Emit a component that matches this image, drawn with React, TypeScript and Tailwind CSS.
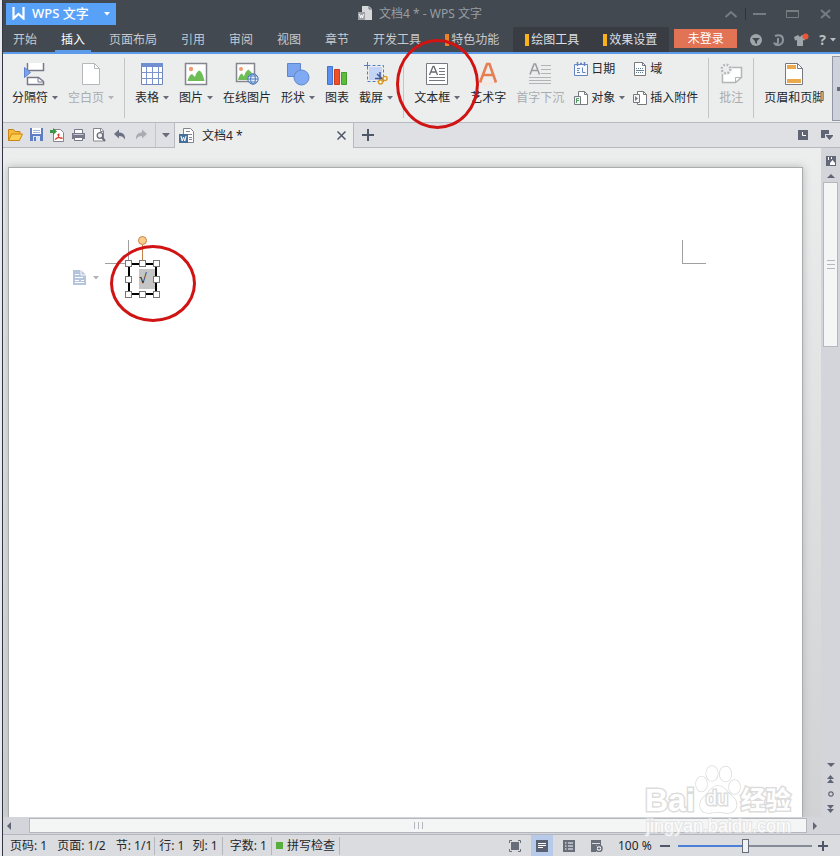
import { useState } from "react";
import type { ReactNode } from "react";

const Svg = ({ w, h, children }: { w: number; h: number; children: ReactNode }) => (
  <svg width={w} height={h} viewBox={`0 0 ${w} ${h}`} fill="none" className="shrink-0" aria-hidden="true">
    {children}
  </svg>
);

const Caret = ({ color = "#676c78" }: { color?: string }) => (
  <Svg w={6} h={4}>
    <path d="M0 0h6L3 3.5z" fill={color} />
  </Svg>
);

/* ribbon icons, 24px high */

const BreakIcon = () => (
  <Svg w={24} h={24}>
    <path d="M4.500 1v7.500h16V1" fill="#fff" stroke="#77798a" strokeWidth="1.500" />
    <path d="M4.500 22.500V15.500h11l5 4v3z" fill="#fff" stroke="#77798a" strokeWidth="1.500" />
    <path d="M15 15.500V20h5" stroke="#77798a" />
    <path d="M1.500 5.500 7.500 10.500l-6 5z" fill="#7da0ea" stroke="#5e83cf" />
  </Svg>
);

const BlankPageIcon = () => (
  <Svg w={24} h={24}>
    <path d="M3.500 1.500h12l5 5v16h-17z" fill="#fff" stroke="#b5b7bb" />
    <path d="M15.500 1.500v5h5" stroke="#b5b7bb" />
  </Svg>
);

const TableIcon = () => (
  <Svg w={24} h={24}>
    <path d="M1.500 1.500h21v21h-21z" fill="#fff" stroke="#6f87b8" />
    <path d="M1 1h22v4H1z" fill="#6f8fd0" />
    <path d="M1 10.500h22M1 16.500h22M6.500 5v17M12.500 5v17M18.500 5v17" stroke="#7b95cc" />
  </Svg>
);

const PictureIcon = () => (
  <Svg w={24} h={24}>
    <path d="M1.500 1.500h21v21h-21z" fill="#fff" stroke="#85858f" strokeWidth="1.500" />
    <circle cx="7" cy="7" r="2.200" fill="#ef9a70" />
    <path d="M3.500 19c1-4 2.500-6.500 4.500-7l3 3c1-4 2.500-6 4.500-6.500 2.500 1.500 4 6 5 10.500z" fill="#6fbd57" />
  </Svg>
);

const OnlinePictureIcon = () => (
  <Svg w={24} h={24}>
    <path d="M1.500 1.500h18v18h-18z" fill="#fff" stroke="#85858f" strokeWidth="1.500" />
    <circle cx="6" cy="7" r="2" fill="#ef9a70" />
    <path d="M3 18c1-4 2-6 4-6.500l2 3c1-4 2.500-6 4.500-7L17 11l-3 7z" fill="#6fbd57" />
    <circle cx="18" cy="17" r="5.200" fill="#e9f1ff" stroke="#4c78b8" />
    <ellipse cx="18" cy="17" rx="2.300" ry="5" stroke="#4c78b8" />
    <path d="M13 17h10M14 14h8M14 20h8" stroke="#4c78b8" />
  </Svg>
);

const ShapesIcon = () => (
  <Svg w={24} h={24}>
    <path d="M1.500 1.500h13v13h-13z" fill="#7ba5ef" stroke="#5f86cc" />
    <circle cx="15.500" cy="15.500" r="7.500" fill="#80aaf4" stroke="#5f86cc" />
  </Svg>
);

const ChartIcon = () => (
  <Svg w={24} h={24}>
    <path d="M2.500 4.500h5v18h-5z" fill="#5b8ff0" stroke="#4273cf" />
    <path d="M9.500 7.500h5v15h-5z" fill="#ef5027" stroke="#cc3d1a" />
    <path d="M16.500 10.500h5v12h-5z" fill="#5cbd3c" stroke="#459a29" />
  </Svg>
);

const ScreenshotIcon = () => (
  <Svg w={24} h={24}>
    <path d="M5 5h13v13H5z" fill="#c3d4f5" />
    <path d="M3.500 3.500h16v16h-16z" stroke="#557ac6" strokeDasharray="3 2" />
    <path d="M3.500 0v6M0 3.500h6" stroke="#557ac6" />
    <path d="M16 10v8.500M13 12l6.500 6M11 16.500h9" stroke="#455b99" strokeWidth="1.500" />
    <circle cx="16.500" cy="20" r="2" fill="#fff" stroke="#d89a28" strokeWidth="1.500" />
    <circle cx="21" cy="16.500" r="2" fill="#fff" stroke="#d89a28" strokeWidth="1.500" />
  </Svg>
);

const TextBoxIcon = () => (
  <Svg w={24} h={24}>
    <path d="M1.500 1.500h21v21h-21z" fill="#fff" stroke="#777980" />
    <path d="M4.500 13 8 4.500h1l3.500 8.500M6 10h5" stroke="#696b70" strokeWidth="1.300" />
    <path d="M14 6.500h6M14 9.500h6M14 12.500h6M4 15.500h16M4 18.500h16" stroke="#777980" />
  </Svg>
);

const WordArtIcon = () => (
  <Svg w={24} h={24}>
    <path d="M5 18c2 4 4 5 7 4s6 0 7-4" stroke="#fae3d9" strokeWidth="2" />
    <path d="M4 20.500 11 2h2.500l6.500 18.500M7 13h10" stroke="#e77e52" strokeWidth="2.600" />
  </Svg>
);

const DropCapIcon = () => (
  <Svg w={24} h={24}>
    <path d="M2 12.500 6 2h1.500l4 10.500M3.500 8.500h6.500" stroke="#9b9da1" strokeWidth="1.600" />
    <path d="M13 3.500h10M13 7.500h10M13 11.500h10M1 15.500h22M1 18.500h22M1 21.500h22" stroke="#b2b4b7" />
  </Svg>
);

const CommentIcon = () => (
  <Svg w={24} h={24}>
    <path d="M3.500 5.500h19v10l-6 5h-13z" fill="#fff" stroke="#b2b4b7" strokeWidth="1.500" />
    <path d="M16.500 20.500v-5h6" stroke="#b2b4b7" />
    <circle cx="7" cy="7" r="6" fill="#eceeed" />
    <circle cx="7" cy="7" r="4.300" stroke="#b2b4b7" strokeWidth="2.400" strokeDasharray="1.700 1.700" />
  </Svg>
);

const HeaderFooterIcon = () => (
  <Svg w={24} h={24}>
    <path d="M3.500 1.500h12l5 5v16h-17z" fill="#fff" stroke="#777980" />
    <path d="M5 3h9v4H5zM5 17h14v4H5z" fill="#eba94e" />
    <path d="M15.500 1.500v5h5" stroke="#777980" />
  </Svg>
);

const DateIcon = () => (
  <Svg w={14} h={14}>
    <path d="M.5 2.500h13v11H.5z" fill="#f5f8ff" stroke="#6484bf" />
    <path d="M3.500 0v4M10.500 0v4M6 1.500h2" stroke="#6484bf" strokeWidth="1.500" />
    <path d="M3 6.500h3M3 8.500h2M3 10.500h3M8.500 5.500v5h3" stroke="#6484bf" />
  </Svg>
);

const FieldIcon = () => (
  <Svg w={14} h={14}>
    <path d="M1.500.5h8l3 3v10h-11z" fill="#fff" stroke="#777980" />
    <path d="M9.500.5v3h3" stroke="#777980" />
    <path d="M3 6.500h8M3 10.500h8" stroke="#5e7f96" strokeDasharray="1 1" />
    <path d="M3 8.500h8" stroke="#5e7f96" />
  </Svg>
);

const ObjectIcon = () => (
  <Svg w={14} h={14}>
    <path d="M4.500.5h6l3 3v10h-9z" fill="#fff" stroke="#777980" />
    <path d="M10.500.5v3h3" stroke="#777980" />
    <path d="M.5 5.500h6v8h-6z" fill="#eef6ef" stroke="#777980" />
    <path d="M2.500 12V7.500H5M2.500 9.500H5" stroke="#4d9a62" />
  </Svg>
);

const AttachmentIcon = () => (
  <Svg w={14} h={14}>
    <path d="M4.500.5h6l3 3v10h-9z" fill="#fff" stroke="#777980" />
    <path d="M10.500.5v3h3" stroke="#777980" />
    <path d="M.5 3.500h6v8h-6z" fill="#f5f6f8" stroke="#777980" />
    <path d="M2 5l3 2.500L2 10z" fill="#777980" />
  </Svg>
);

/* quick access icons */

const quickIcons: { name: string; icon: ReactNode }[] = [
  {
    name: "打开",
    icon: (
      <Svg w={15} h={14}>
        <path d="M.5 12.500v-11h5l1.500 2h5v3" fill="#f6b93a" stroke="#c98516" />
        <path d="M.5 12.500 3.500 6h11l-3 6.500z" fill="#ffcf52" stroke="#c98516" />
      </Svg>
    ),
  },
  {
    name: "保存",
    icon: (
      <Svg w={15} h={14}>
        <path d="M1 0h13v13H1z" fill="#5e7fc4" />
        <path d="M3 0h9v6H3z" fill="#fff" />
        <path d="M4 2.500h7M4 4.500h7" stroke="#9fb2dc" />
        <path d="M4 8h7v5H4z" fill="#dce4f5" />
        <path d="M5 9h2v4H5z" fill="#5e7fc4" />
      </Svg>
    ),
  },
  {
    name: "输出为PDF",
    icon: (
      <Svg w={15} h={14}>
        <path d="M3.500 1.500h7l3 3v9h-10z" fill="#fff" stroke="#85878f" />
        <path d="M5 11.500c3-1 4-4 4-6M8 6c0 3 2 4.500 4.500 4.500M5 11.500c1.500-2 4-2.500 7.500-1.500" stroke="#dc3b2a" strokeWidth="1.200" />
        <path d="M0 2h3V0l4 3.500L3 7V5H0z" fill="#3c9548" />
      </Svg>
    ),
  },
  {
    name: "打印",
    icon: (
      <Svg w={15} h={14}>
        <path d="M3.500 1.500h8v4h-8z" fill="#fff" stroke="#75798a" />
        <path d="M1 5h13v6H1z" fill="#75798a" />
        <path d="M2.500 6.500h10" stroke="#c8cbd6" />
        <path d="M3.500 9.500h8v3h-8z" fill="#fff" stroke="#75798a" />
      </Svg>
    ),
  },
  {
    name: "打印预览",
    icon: (
      <Svg w={15} h={14}>
        <path d="M1.500.5h8l2 2.500v10h-10z" fill="#fff" stroke="#85878f" />
        <path d="M8.500.5v3h3" stroke="#85878f" />
        <circle cx="8" cy="7.500" r="2.800" fill="#eef1f6" stroke="#696d7a" strokeWidth="1.300" />
        <path d="m10 9.500 3 3.500" stroke="#696d7a" strokeWidth="2" />
      </Svg>
    ),
  },
  {
    name: "撤销",
    icon: (
      <Svg w={15} h={14}>
        <path d="M1 6 6 1.500V4.500c4 0 6.500 2.500 6 7-1.500-2.500-3-3.500-6-3.500v2.500z" fill="#6b7183" />
      </Svg>
    ),
  },
  {
    name: "恢复",
    icon: (
      <Svg w={15} h={14}>
        <path d="M13 6 8 1.500V4.500c-4 0-6.500 2.500-6 7 1.500-2.500 3-3.500 6-3.500v2.500z" fill="#a9acb3" />
      </Svg>
    ),
  },
];

const menus = ["开始", "插入", "页面布局", "引用", "审阅", "视图", "章节", "开发工具"];

type RibbonButtonProps = {
  label: string;
  icon: ReactNode;
  caret?: boolean;
  disabled?: boolean;
  children?: ReactNode;
};

const RibbonButton = ({ label, icon, caret, disabled, children }: RibbonButtonProps) => (
  <button
    type="button"
    disabled={disabled}
    className="relative flex shrink-0 flex-col items-center gap-1 pt-2 text-[#25272b] disabled:text-[#a9acaf]"
  >
    {icon}
    <span className="flex items-center gap-1 leading-4">
      {label}
      {caret && <Caret color={disabled ? "#b2b4b7" : "#676c78"} />}
    </span>
    {children}
  </button>
);

const SmallButton = ({ label, icon, caret }: RibbonButtonProps) => (
  <button type="button" className="flex items-center gap-[3px] leading-4">
    {icon}
    <span className="flex items-center gap-1">
      {label}
      {caret && <Caret />}
    </span>
  </button>
);

const Divider = () => <div className="mt-1 h-[60px] w-px shrink-0 bg-[#c3c5c8]" />;

const TitleBar = () => (
  <header className="flex h-[27px] items-center pl-[3px]">
    <button type="button" className="flex h-[22px] w-[110px] items-center bg-[#58a1f8] pl-1.5 text-white">
      <Svg w={13} h={13}>
        <path d="M1.500 0v11.500L6.500 7l5 4.500V0" stroke="#fff" strokeWidth="2.200" />
      </Svg>
      <span className="ml-[7px] text-[13px] font-medium">WPS 文字</span>
      <span className="mr-1.5 ml-auto">
        <Caret color="#fff" />
      </span>
    </button>
    <div className="flex flex-1 items-center justify-center gap-1.5 text-[#989da3]">
      <Svg w={15} h={15}>
        <path d="M4 0h7l3 3v11H4z" fill="#d6d8da" />
        <path d="M11 0v3h3" stroke="#6b7077" />
        <path d="M0 6h7v8H0z" fill="#9da1a6" />
        <path d="m1.500 8 1 4 1-3 1 3 1-4" stroke="#fff" />
      </Svg>
      <h1>文档4 * - WPS 文字</h1>
    </div>
    <div className="flex items-center pr-2">
      <button type="button" aria-label="收起功能区" className="w-3.5">
        <Svg w={14} h={8}>
          <path d="m1.500 7 5.500-5 5.500 5" stroke="#777c83" strokeWidth="2" />
        </Svg>
      </button>
      <div className="mx-[7px] h-3 w-px bg-[#2f343a]" />
      <button type="button" aria-label="最小化">
        <Svg w={13} h={10}>
          <path d="M0 5h13" stroke="#777c83" strokeWidth="2" />
        </Svg>
      </button>
      <button type="button" aria-label="最大化" className="ml-5">
        <Svg w={13} h={8}>
          <path d="M.5 1v6.500h12V1" stroke="#777c83" />
          <path d="M0 1h13" stroke="#777c83" strokeWidth="2" />
        </Svg>
      </button>
      <button type="button" aria-label="关闭" className="ml-5">
        <Svg w={13} h={10}>
          <path d="m2 1 9 8M11 1 2 9" stroke="#777c83" strokeWidth="2" />
        </Svg>
      </button>
    </div>
  </header>
);

const MenuBar = () => {
  const [active, setActive] = useState("插入");

  return (
    <nav className="flex h-[27px] border-b-2 border-[#5c9bea] text-[#c6cacf]">
      <div className="flex gap-3 pl-1">
        {menus.map((name) => (
          <button
            key={name}
            type="button"
            onClick={() => setActive(name)}
            className={
              name === active
                ? "border-b-2 border-[#5c9bea] px-1.5 pt-0.5 text-white"
                : "border-b-2 border-transparent px-1.5 pt-0.5"
            }
          >
            {name}
          </button>
        ))}
      </div>
      <button type="button" className="ml-[18px] flex items-center gap-0.5 pr-3.5">
        <i className="h-3 w-1 bg-[#ee8126]" />
        特色功能
      </button>
      <div className="flex gap-6 bg-[#393d43] px-3 text-[#dcdfe2]">
        {["绘图工具", "效果设置"].map((name) => (
          <button key={name} type="button" className="flex items-center gap-0.5">
            <i className="h-3 w-1 bg-[#f9b11d]" />
            {name}
          </button>
        ))}
      </div>
      <button type="button" className="mt-0.5 ml-[5px] h-[19px] w-[63px] bg-[#e37355] leading-[18px] text-white">
        未登录
      </button>
      <div className="mr-1 ml-auto flex items-center gap-2.5">
        <button type="button" aria-label="皮肤">
          <Svg w={12} h={12}>
            <circle cx="6" cy="6" r="6" fill="#a0a5aa" />
            <path d="M2 4h8L7 7v3L5 8.500V7z" fill="#42484f" />
          </Svg>
        </button>
        <button type="button" aria-label="同步">
          <Svg w={12} h={12}>
            <path d="M3 2c5-2 8 0 8 4s-4 6-8 4.500M6 4v3.500a2 2 0 1 1-4 1" stroke="#8f949a" strokeWidth="2" />
          </Svg>
        </button>
        <button type="button" aria-label="换肤">
          <Svg w={15} h={13}>
            <path d="M0 4l4-2 2 2 2-2 4 2-1.500 3.500-1.500-.5v6H3V7l-2 .5z" fill="#a0a5aa" />
            <circle cx="11.500" cy="3.500" r="3" fill="#e8573a" />
          </Svg>
        </button>
        <button type="button" aria-label="帮助" className="flex items-center gap-1 text-sm font-bold text-[#b9bdc1]">
          <span aria-hidden="true">?</span>
          <Caret color="#b9bdc1" />
        </button>
      </div>
    </nav>
  );
};

const Ribbon = () => (
  <section className="flex h-[69px] gap-2.5 border-b border-[#b6b9c0] bg-[#eceeed] pl-[9px]">
    <RibbonButton label="分隔符" icon={<BreakIcon />} caret />
    <RibbonButton label="空白页" icon={<BlankPageIcon />} caret disabled />
    <Divider />
    <RibbonButton label="表格" icon={<TableIcon />} caret />
    <RibbonButton label="图片" icon={<PictureIcon />} caret />
    <RibbonButton label="在线图片" icon={<OnlinePictureIcon />} />
    <RibbonButton label="形状" icon={<ShapesIcon />} caret />
    <RibbonButton label="图表" icon={<ChartIcon />} />
    <RibbonButton label="截屏" icon={<ScreenshotIcon />} caret />
    <Divider />
    <RibbonButton label="文本框" icon={<TextBoxIcon />} caret>
      <span className="pointer-events-none absolute -top-[15px] -left-[18px] z-10 h-[90px] w-[83px] rounded-[50%] border-3 border-[#d01414]" />
    </RibbonButton>
    <RibbonButton label="艺术字" icon={<WordArtIcon />} />
    <RibbonButton label="首字下沉" icon={<DropCapIcon />} disabled />
    <div className="grid shrink-0 grid-cols-[auto_auto] content-start gap-x-2 gap-y-[13px] pt-[7px] text-[#25272b]">
      <SmallButton label="日期" icon={<DateIcon />} />
      <SmallButton label="域" icon={<FieldIcon />} />
      <SmallButton label="对象" icon={<ObjectIcon />} caret />
      <SmallButton label="插入附件" icon={<AttachmentIcon />} />
    </div>
    <Divider />
    <RibbonButton label="批注" icon={<CommentIcon />} disabled />
    <Divider />
    <RibbonButton label="页眉和页脚" icon={<HeaderFooterIcon />} />
    <button
      type="button"
      aria-label="更多"
      className="mt-0.5 -ml-0.5 flex h-[65px] flex-1 items-center border border-r-0 border-[#9297a5] bg-[#ced2da] pl-1"
    >
      <i className="h-1 w-1 bg-[#676c78]" />
    </button>
  </section>
);

const TabStrip = () => (
  <div className="flex h-[25px] bg-[#dfe0e4]">
    <div className="flex items-center gap-1.5 border-r border-b border-[#b6b9c0] pl-[5px]">
      {quickIcons.map(({ name, icon }) => (
        <button key={name} type="button" aria-label={name}>
          {icon}
        </button>
      ))}
      <button type="button" aria-label="自定义" className="flex h-full w-[19px] items-center border-l border-[#c3c5cb] pl-1.5">
        <Svg w={8} h={5}>
          <path d="M0 0h8L4 4.500z" fill="#676c78" />
        </Svg>
      </button>
    </div>
    <div className="flex w-[179px] items-center border-r border-[#b6b9c0] bg-[#eceeed] pl-1">
      <Svg w={16} h={17}>
        <path d="M4.500 1.500h7l3 3v11h-10z" fill="#fff" stroke="#82858d" />
        <path d="M7 4.500h4M7 7.500h6M10 10.500h3M10 12.500h3" stroke="#82858d" />
        <path d="M0 7h9v9H0z" fill="#466f9e" />
        <path d="m2 9 1.200 5L4.500 10l1.300 4L7 9" stroke="#fff" />
      </Svg>
      <span className="ml-[7px] text-[#25272b]">文档4 *</span>
      <button type="button" aria-label="关闭标签" className="mr-[7px] ml-auto">
        <Svg w={9} h={9}>
          <path d="m.5.5 8 8M8.500.5l-8 8" stroke="#4f5769" strokeWidth="1.500" />
        </Svg>
      </button>
    </div>
    <div className="flex flex-1 items-center border-b border-[#b6b9c0] pr-[7px] pl-2">
      <button type="button" aria-label="新建标签">
        <Svg w={12} h={12}>
          <path d="M6 0v12M0 6h12" stroke="#4f5769" strokeWidth="2" />
        </Svg>
      </button>
      <button type="button" aria-label="历史" className="ml-auto">
        <Svg w={10} h={10}>
          <path d="M0 0h10v10H0z" fill="#5f6575" />
          <path d="M4.500 2v3.500H8" stroke="#fff" />
        </Svg>
      </button>
      <button type="button" aria-label="窗口列表" className="ml-[13px]">
        <Svg w={12} h={10}>
          <path d="M0 0h8v4H4v4H0z" fill="#5f6575" />
          <path d="M5 5h7v1L8.500 10 5 6z" fill="#5f6575" />
        </Svg>
      </button>
    </div>
  </div>
);

const handles = [
  "top-0 left-0",
  "top-0 left-3.5",
  "top-0 left-7",
  "top-4 left-0",
  "top-4 left-7",
  "top-[31px] left-0",
  "top-[31px] left-3.5",
  "top-[31px] left-7",
];

const Paper = () => (
  <main className="relative mt-[19px] mr-[18px] ml-[5px] flex-1 border border-b-0 border-[#a9acad] bg-white shadow-[0_0_8px_#b4b6b7]">
    <div className="absolute top-[72px] left-24 h-6 w-6 border-r border-b border-[#a0a0a0]" />
    <div className="absolute top-[72px] right-24 h-6 w-6 border-b border-l border-[#a0a0a0]" />

    <button type="button" aria-label="段落布局" className="absolute top-[102px] left-16 flex items-center gap-[7px]">
      <Svg w={13} h={15}>
        <path d="M0 0h8l5 5v10H0z" fill="#b4c4dc" />
        <path d="M8 0v5h5M2 4.500h4M2 7.500h8M2 10.500h4M2 12.500h9M8 10.500h3" stroke="#fff" />
      </Svg>
      <Caret color="#b0b2b6" />
    </button>

    <div className="absolute top-[92px] left-[116px] h-[38px] w-[35px]">
      <div className="absolute top-[3px] left-[3px] flex h-[32px] w-[29px] items-center justify-end border-2 border-black">
        <span className="h-5 w-4 bg-[#c5c5c5] font-['Liberation_Serif',serif] text-sm leading-5 text-black">√</span>
      </div>
      <div className="absolute -top-[16px] left-[17px] h-4 w-px bg-[#c58345]" />
      <div className="absolute -top-[24px] left-[13px] h-[9px] w-[9px] rounded-full border border-[#c58345] bg-[#fccd8b]" />
      {handles.map((pos) => (
        <i key={pos} className={`absolute h-[7px] w-[7px] border border-[#777] bg-white ${pos}`} />
      ))}
      <div className="absolute -top-[15px] -left-[15px] h-[77px] w-[86px] rounded-[50%] border-3 border-[#d01414]" />
    </div>
  </main>
);

const VerticalScroll = () => (
  <aside className="flex w-[19px] flex-col items-center bg-[#d3d5da] pt-2">
    <button type="button" aria-label="标尺">
      <Svg w={10} h={10}>
        <path d="M0 0h10v10H0z" fill="#626878" />
        <path d="M2.500 1v3M5.500 1v2" stroke="#fff" />
        <path d="M4 9V7l2.500-3L9 7v2z" fill="#fff" />
      </Svg>
    </button>
    <button type="button" aria-label="向上滚动" className="mt-2">
      <Svg w={8} h={4}>
        <path d="M0 4h8L4 0z" fill="#5f6575" />
      </Svg>
    </button>
    <div className="mt-1 flex h-[165px] w-[15px] flex-col items-center justify-center gap-[3px] border border-[#b4b7bd] bg-[#f4f5f5]">
      <i className="h-px w-2 bg-[#b4b7bd]" />
      <i className="h-px w-2 bg-[#b4b7bd]" />
      <i className="h-px w-2 bg-[#b4b7bd]" />
    </div>
    <div className="mt-auto mb-1 flex flex-col items-center gap-2">
      <button type="button" aria-label="向下滚动">
        <Svg w={8} h={4}>
          <path d="M0 0h8L4 4z" fill="#5f6575" />
        </Svg>
      </button>
      <button type="button" aria-label="前一页">
        <Svg w={7} h={8}>
          <path d="M0 4h7L3.500 0zM0 8h7L3.500 4z" fill="#5f6575" />
        </Svg>
      </button>
      <button type="button" aria-label="选择浏览对象">
        <Svg w={6} h={6}>
          <circle cx="3" cy="3" r="2.200" stroke="#5f6575" strokeWidth="1.200" />
        </Svg>
      </button>
      <button type="button" aria-label="下一页">
        <Svg w={7} h={8}>
          <path d="M0 0h7L3.500 4zM0 4h7L3.500 8z" fill="#5f6575" />
        </Svg>
      </button>
    </div>
  </aside>
);

const HorizontalScroll = () => (
  <div className="flex h-[18px] items-center border-b border-[#b4b7bd] bg-[#d3d5da] pr-[23px] pl-1">
    <button type="button" aria-label="向左滚动">
      <Svg w={4} h={8}>
        <path d="M4 0v8L0 4z" fill="#5f6575" />
      </Svg>
    </button>
    <div className="mr-1.5 ml-[18px] flex h-[15px] flex-1 items-center justify-center gap-[3px] border border-[#b4b7bd] bg-[#f4f5f5]">
      <i className="h-[7px] w-px bg-[#b4b7bd]" />
      <i className="h-[7px] w-px bg-[#b4b7bd]" />
      <i className="h-[7px] w-px bg-[#b4b7bd]" />
    </div>
    <button type="button" aria-label="向右滚动">
      <Svg w={4} h={8}>
        <path d="M0 0v8l4-4z" fill="#5f6575" />
      </Svg>
    </button>
  </div>
);

const StatusBar = () => {
  const [zoom, setZoom] = useState(100);

  return (
    <footer className="flex h-[21px] items-center bg-[#dadcdf] pr-3 pl-[7px] text-[#25272b]">
      <div className="flex items-center gap-2.5 border-r border-[#b4b7bd] pr-0.5 leading-[18px]">
        <span>页码: 1</span>
        <span>页面: 1/2</span>
        <span>节: 1/1</span>
      </div>
      <div className="flex gap-2 border-r border-[#b4b7bd] pr-1 pl-1 leading-[18px]">
        <span>行: 1</span>
        <span>列: 1</span>
      </div>
      <span className="border-r border-[#b4b7bd] pr-1 pl-[7px] leading-[18px]">字数: 1</span>
      <span className="flex items-center gap-1 border-r border-[#b4b7bd] px-1 leading-[18px]">
        <i className="h-[7px] w-[7px] bg-[#57ae3c]" />
        拼写检查
      </span>

      <div className="ml-auto flex h-full items-center">
        <button type="button" aria-label="全屏显示" className="mr-2.5">
          <Svg w={12} h={12}>
            <path d="M2 2h8v8H2z" fill="#676d79" />
            <path d="M.5 3V.5H3M9 .5h2.500V3M11.500 9v2.500H9M3 11.500H.5V9" stroke="#676d79" />
          </Svg>
        </button>
        <button type="button" aria-label="页面视图" className="flex h-full w-[22px] items-center justify-center bg-[#b7caea]">
          <Svg w={12} h={12}>
            <path d="M0 0h12v12H0z" fill="#596072" />
            <path d="M2 3.500h8M2 5.500h8M2 7.500h5" stroke="#fff" />
          </Svg>
        </button>
        <button type="button" aria-label="大纲视图" className="ml-2.5">
          <Svg w={12} h={12}>
            <path d="M0 0h12v12H0z" fill="#676d79" />
            <path d="M2 3h1.500M5 3h5M2 6h1.500M5 6h5M2 9h1.500M5 9h5" stroke="#fff" strokeWidth="1.200" />
          </Svg>
        </button>
        <button type="button" aria-label="Web版式" className="ml-4">
          <Svg w={12} h={12}>
            <path d="M0 0h10v5H5v7H0z" fill="#676d79" />
            <path d="M1 3.500h8" stroke="#dadcdf" />
            <circle cx="8" cy="8.500" r="3" fill="#fff" stroke="#676d79" strokeWidth="1.500" />
            <path d="M6.500 8.500h3M8 7v3" stroke="#676d79" />
          </Svg>
        </button>
        <label htmlFor="zoom" className="ml-[15px] w-[42px]">
          {zoom} %
        </label>
        <button type="button" aria-label="缩小" onClick={() => setZoom(Math.max(0, zoom - 10))}>
          <Svg w={10} h={10}>
            <path d="M0 5h10" stroke="#4f5769" strokeWidth="2" />
          </Svg>
        </button>
        <input
          id="zoom"
          type="range"
          min={0}
          max={200}
          value={zoom}
          onChange={(e) => setZoom(Number(e.target.value))}
          className="mr-1.5 ml-2 h-0.5 w-[134px] appearance-none [&::-webkit-slider-thumb]:h-3.5 [&::-webkit-slider-thumb]:w-[7px] [&::-webkit-slider-thumb]:appearance-none [&::-webkit-slider-thumb]:border [&::-webkit-slider-thumb]:border-[#676d79] [&::-webkit-slider-thumb]:bg-[#f0f1f2]"
          style={{ background: `linear-gradient(90deg, #4c7fd6 ${zoom / 2}%, #858c98 ${zoom / 2}%)` }}
        />
        <button type="button" aria-label="放大" onClick={() => setZoom(Math.min(200, zoom + 10))}>
          <Svg w={10} h={10}>
            <path d="M5 0v10M0 5h10" stroke="#4f5769" strokeWidth="2" />
          </Svg>
        </button>
      </div>
    </footer>
  );
};

const Watermark = () => (
  <div className="pointer-events-none absolute right-12 bottom-5 w-[147px] font-['Liberation_Sans','Noto_Sans_CJK_SC',sans-serif] text-white">
    <div className="flex h-12 items-end font-bold [-webkit-text-stroke:3px_#dcdcdc] [paint-order:stroke_fill]">
      <span className="text-[32px] leading-8">Bai</span>
      <div className="relative mb-0.5">
        <svg width="46" height="49" viewBox="0 0 46 49" fill="#fff" stroke="#dcdcdc" strokeWidth="1.500" aria-hidden="true">
          <ellipse cx="6.500" cy="19" rx="5.500" ry="7.500" />
          <ellipse cx="17" cy="8.500" rx="5.800" ry="7.500" />
          <ellipse cx="30.500" cy="9" rx="5.800" ry="7.500" />
          <ellipse cx="39.500" cy="22" rx="5.500" ry="7" />
          <path d="M23 21c-7 0-8 6-13 10-7 6-7 16 3 17 4 0 6-1 10-1s6 1 10 1c10-1 11-11 4-17-6-4-7-10-14-10z" />
        </svg>
        <span className="absolute bottom-1 left-[11px] text-xl leading-6 font-normal">du</span>
      </div>
      <span className="text-[25px] leading-8">经验</span>
    </div>
    <div className="text-center text-[18px] leading-5 opacity-80 [-webkit-text-stroke:2px_#e0e1e2] [paint-order:stroke_fill]">
      jingyan.baidu.com
    </div>
  </div>
);

export default function App() {
  return (
    <div className="flex min-h-screen overflow-hidden bg-[#e6eaf0] pl-0.5 font-['Noto_Sans','Noto_Sans_CJK_SC',sans-serif] text-xs whitespace-nowrap">
      <div className="relative flex min-w-0 flex-1 flex-col border-l border-[#33373d] bg-[#434950]">
        <TitleBar />
        <MenuBar />
        <Ribbon />
        <TabStrip />
        <div className="flex flex-1 overflow-hidden bg-linear-to-b from-[#eceeed] to-[#d0d2d3]">
          <Paper />
          <VerticalScroll />
        </div>
        <HorizontalScroll />
        <StatusBar />
        <Watermark />
      </div>
    </div>
  );
}
